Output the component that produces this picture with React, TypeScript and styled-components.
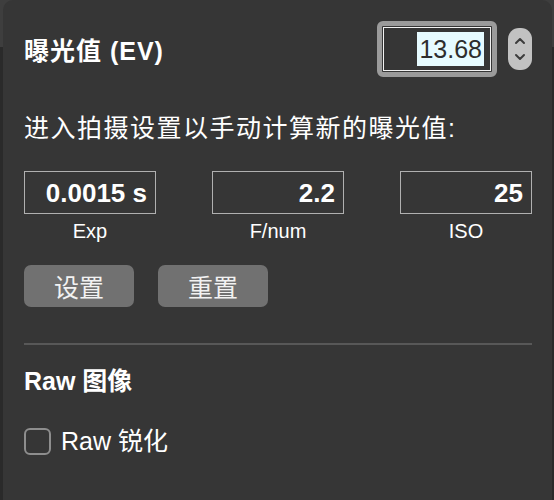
import React from "react";
import styled, { createGlobalStyle } from "styled-components";

const GlobalStyle = createGlobalStyle`
    html, body {
        margin: 0;
        padding: 0;
        background-color: #2a2a2a;
        font-family: "Liberation Sans", "Noto Sans CJK SC", sans-serif;
    }
`;

const Frame = styled.div`
    width: 554px;
    height: 500px;
    display: flex;
    overflow: hidden;
    background: linear-gradient(to bottom, #3e3e3e 0, #3e3e3e 47px, #2a2a2a 47px);
`;

const Panel = styled.div`
    flex: 0 0 548px;
    margin-left: 3px;
    height: 500px;
    box-sizing: border-box;
    padding: 21px 20px 0 21px;
    background-color: #363636;
    border-radius: 10px 10px 0 0;
    color: #ffffff;
    display: flex;
    flex-direction: column;
`;

const HeaderRow = styled.div`
    display: flex;
    align-items: center;
    height: 56px;
`;

const Heading = styled.h1`
    flex: 1;
    margin: 4px 0 0 0;
    font-size: 25px;
    line-height: 30px;
    font-weight: bold;
    letter-spacing: 1px;
`;

const EvField = styled.div`
    width: 120px;
    height: 56px;
    box-sizing: border-box;
    border: 5px solid #9b9b9b;
    border-radius: 6px;
    padding: 1px;
    display: flex;
`;

const EvInner = styled.div`
    flex: 1;
    border: 1px solid #f2f2f2;
    display: flex;
    align-items: center;
    justify-content: flex-end;
    padding-right: 6px;
`;

const Selected = styled.span`
    background-color: #e6fbff;
    color: #2d2d2d;
    font-size: 25px;
    line-height: 34px;
    padding: 0 2px 0 2px;
`;

const Stepper = styled.div`
    width: 24px;
    height: 42px;
    margin-left: 11px;
    border-radius: 11px;
    background-color: #c2c2c2;
    display: flex;
    align-items: center;
    justify-content: center;
`;

const Intro = styled.p`
    margin: 36px 0 0 0;
    font-size: 25px;
    line-height: 30px;
    letter-spacing: 1.5px;
`;

const Fields = styled.div`
    display: grid;
    grid-template-columns: repeat(3, 132px);
    column-gap: 56px;
    margin-top: 28px;
`;

const Field = styled.div`
    display: flex;
    flex-direction: column;
    align-items: center;
`;

const ValueBox = styled.div`
    width: 132px;
    height: 43px;
    box-sizing: border-box;
    border: 1px solid #b0b0b0;
    display: flex;
    align-items: center;
    justify-content: flex-end;
    padding: 1px 8px 0 0;
    font-size: 26px;
    font-weight: bold;
`;

const FieldLabel = styled.span`
    margin-top: 5px;
    font-size: 20px;
    line-height: 24px;
`;

const Buttons = styled.div`
    display: flex;
    gap: 24px;
    margin-top: 22px;
`;

const Button = styled.button`
    width: 110px;
    height: 42px;
    border: none;
    border-radius: 7px;
    background-color: #717171;
    color: #f2f2f2;
    font-family: "Noto Sans CJK SC", sans-serif;
    font-size: 25px;
    line-height: 42px;
    padding: 0;
`;

const Divider = styled.hr`
    margin: 36px 0 0 0;
    width: 508px;
    border: none;
    height: 2px;
    background-color: #585858;
`;

const Section = styled.h2`
    margin: 21px 0 0 0;
    font-size: 25px;
    line-height: 30px;
    font-weight: bold;
`;

const CheckRow = styled.label`
    display: flex;
    align-items: center;
    gap: 10px;
    margin-top: 32px;
    font-size: 25px;
    line-height: 27px;
`;

const CheckBox = styled.span`
    width: 27px;
    height: 27px;
    box-sizing: border-box;
    border: 2px solid #8e8e8e;
    border-radius: 6px;
`;

const Chevrons = () => (
    <svg width="14" height="30" viewBox="0 0 14 30" fill="none" stroke="#3c3c3c" strokeWidth="2" strokeLinecap="round" strokeLinejoin="round">
        <path d="M3 9 L7 5 L11 9" />
        <path d="M3 21 L7 25 L11 21" />
    </svg>
);

const App: React.FC = () => {
    const inputs = [
        { value: "0.0015 s", label: "Exp" },
        { value: "2.2", label: "F/num" },
        { value: "25", label: "ISO" },
    ];

    return (
        <>
            <GlobalStyle />
            <Frame>
                <Panel>
                    <HeaderRow>
                        <Heading>曝光值 (EV)</Heading>
                        <EvField>
                            <EvInner>
                                <Selected>13.68</Selected>
                            </EvInner>
                        </EvField>
                        <Stepper>
                            <Chevrons />
                        </Stepper>
                    </HeaderRow>
                    <Intro>进入拍摄设置以手动计算新的曝光值:</Intro>
                    <Fields>
                        {inputs.map((item) => (
                            <Field key={item.label}>
                                <ValueBox>{item.value}</ValueBox>
                                <FieldLabel>{item.label}</FieldLabel>
                            </Field>
                        ))}
                    </Fields>
                    <Buttons>
                        <Button>设置</Button>
                        <Button>重置</Button>
                    </Buttons>
                    <Divider />
                    <Section>Raw 图像</Section>
                    <CheckRow>
                        <CheckBox />
                        Raw 锐化
                    </CheckRow>
                </Panel>
            </Frame>
        </>
    );
};

export default App;
